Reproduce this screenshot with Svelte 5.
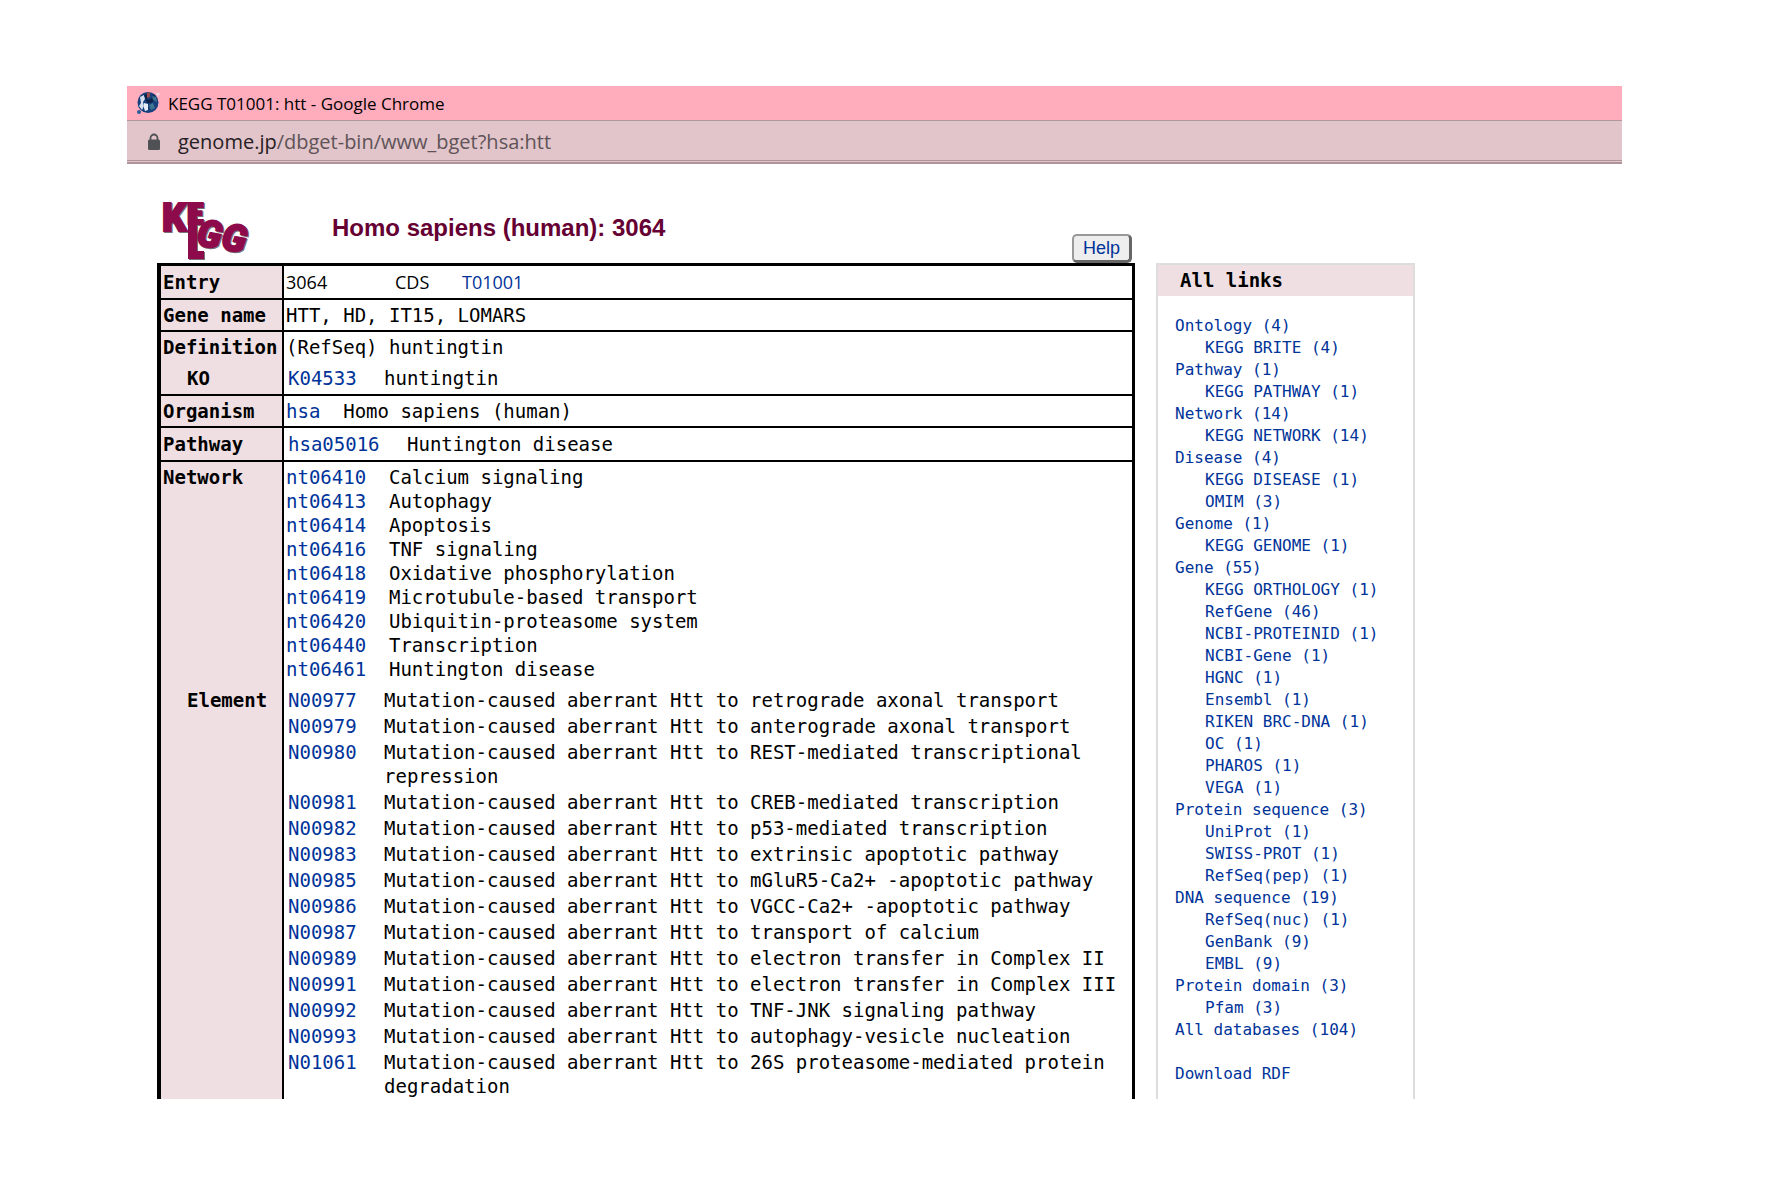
<script>
  const network = [
    ['nt06410', 'Calcium signaling'],
    ['nt06413', 'Autophagy'],
    ['nt06414', 'Apoptosis'],
    ['nt06416', 'TNF signaling'],
    ['nt06418', 'Oxidative phosphorylation'],
    ['nt06419', 'Microtubule-based transport'],
    ['nt06420', 'Ubiquitin-proteasome system'],
    ['nt06440', 'Transcription'],
    ['nt06461', 'Huntington disease'],
  ];
  const elements = [
    ['N00977', 'retrograde axonal transport'],
    ['N00979', 'anterograde axonal transport'],
    ['N00980', 'REST-mediated transcriptional repression'],
    ['N00981', 'CREB-mediated transcription'],
    ['N00982', 'p53-mediated transcription'],
    ['N00983', 'extrinsic apoptotic pathway'],
    ['N00985', 'mGluR5-Ca2+ -apoptotic pathway'],
    ['N00986', 'VGCC-Ca2+ -apoptotic pathway'],
    ['N00987', 'transport of calcium'],
    ['N00989', 'electron transfer in Complex II'],
    ['N00991', 'electron transfer in Complex III'],
    ['N00992', 'TNF-JNK signaling pathway'],
    ['N00993', 'autophagy-vesicle nucleation'],
    ['N01061', '26S proteasome-mediated protein degradation'],
  ];
  const links = [
    ['Ontology (4)', ['KEGG BRITE (4)']],
    ['Pathway (1)', ['KEGG PATHWAY (1)']],
    ['Network (14)', ['KEGG NETWORK (14)']],
    ['Disease (4)', ['KEGG DISEASE (1)', 'OMIM (3)']],
    ['Genome (1)', ['KEGG GENOME (1)']],
    ['Gene (55)', ['KEGG ORTHOLOGY (1)', 'RefGene (46)', 'NCBI-PROTEINID (1)', 'NCBI-Gene (1)', 'HGNC (1)', 'Ensembl (1)', 'RIKEN BRC-DNA (1)', 'OC (1)', 'PHAROS (1)', 'VEGA (1)']],
    ['Protein sequence (3)', ['UniProt (1)', 'SWISS-PROT (1)', 'RefSeq(pep) (1)']],
    ['DNA sequence (19)', ['RefSeq(nuc) (1)', 'GenBank (9)', 'EMBL (9)']],
    ['Protein domain (3)', ['Pfam (3)']],
    ['All databases (104)', []],
  ];
</script>

<div class="window">
  <header class="titlebar">
    <svg width="24" height="24" viewBox="0 0 24 24" aria-hidden="true">
      <circle cx="12" cy="11.500" r="10.500" fill="#173f7d" />
      <path d="M4 6L8 4L9 8L7 11L8 15L6 19L3 15L5 12Z" fill="#d5deea" />
      <path d="M8 12L12 13L12 19L9 20L8 17Z" fill="#e6ecf5" />
      <path d="M8 4L12 3L11 9L15 8L18 3L20 8L15 12L11 12Z" fill="#0b2146" />
      <path d="M11 2L14 1L14 6L11 7Z" fill="#9a4a48" />
      <path d="M16 5L20 6L21 11L17 9ZM13 14L17 12L19 17L15 19Z" fill="#3d7590" />
      <path d="M20 2L24 2L22 6Z" fill="#f2d9e2" />
      <circle cx="3" cy="21" r="2" fill="#2b5a98" />
    </svg>
    <span>KEGG T01001: htt - Google Chrome</span>
  </header>
  <div class="urlbar">
    <svg width="14" height="18" viewBox="0 0 14 18" aria-hidden="true">
      <path d="M3.500 7V5a3.500 3.500 0 0 1 7 0v2" fill="none" stroke="#505155" stroke-width="1.800" />
      <rect x="1" y="6.500" width="12" height="10.500" rx="1.500" fill="#505155" />
    </svg>
    <span class="url"><span class="host">genome.jp</span>/dbget-bin/www_bget?hsa:htt</span>
  </div>

  <main>
    <section class="record">
      <div class="masthead">
        <svg class="logo" width="92" height="62" viewBox="0 0 92 62" role="img" aria-label="KEGG">
          <defs>
            <g id="mark" font-family="Roboto, sans-serif" font-weight="900" stroke-width="2">
              <text x="0" y="31" font-size="38">K</text>
              <text x="25" y="24" font-size="29">E</text>
              <rect x="27" y="4" width="7" height="54" />
              <rect x="27" y="52" width="14" height="6" />
              <text x="35" y="47" font-size="37" font-style="italic" transform="rotate(10 48 36)">G</text>
              <text x="60" y="51" font-size="37" font-style="italic" transform="rotate(10 73 38)">G</text>
            </g>
          </defs>
          <use href="#mark" x="2" y="2" fill="#77727a" stroke="#77727a" />
          <use href="#mark" x="1" y="1" fill="#8d0a4b" stroke="#8d0a4b" />
        </svg>
        <h1>Homo sapiens (human): 3064</h1>
        <button type="button">Help</button>
      </div>

      <table>
        <tbody>
          <tr class="tall">
            <th scope="row">Entry</th>
            <td><div class="ids"><span>3064</span><span>CDS</span><a href="#T01001">T01001</a></div></td>
          </tr>
          <tr><th scope="row">Gene name</th><td>HTT, HD, IT15, LOMARS</td></tr>
          <tr class="upper"><th scope="row">Definition</th><td>(RefSeq) huntingtin</td></tr>
          <tr class="tall">
            <th scope="row" class="sub">KO</th>
            <td><div class="pair"><a href="#K04533">K04533</a><span>huntingtin</span></div></td>
          </tr>
          <tr><th scope="row">Organism</th><td class="spaced"><a href="#hsa">hsa</a>{'  '}Homo sapiens (human)</td></tr>
          <tr class="tall">
            <th scope="row">Pathway</th>
            <td><div class="pair wide"><a href="#hsa05016">hsa05016</a><span>Huntington disease</span></div></td>
          </tr>
          <tr class="upper">
            <th scope="row">Network</th>
            <td class="spaced">{#each network as [id, name]}<div><a href="#{id}">{id}</a>{'  '}{name}</div>{/each}</td>
          </tr>
          <tr class="elements">
            <th scope="row" class="sub">Element</th>
            <td>
              {#each elements as [id, name]}
                <div class="pair"><a href="#{id}">{id}</a><span>Mutation-caused aberrant Htt to {name}</span></div>
              {/each}
            </td>
          </tr>
        </tbody>
      </table>
    </section>

    <aside>
      <h2>All links</h2>
      <ul>
        {#each links as [group, items]}
          <li>
            <a href="#{group}">{group}</a>
            {#if items.length}
              <ul>
                {#each items as item}<li><a href="#{item}">{item}</a></li>{/each}
              </ul>
            {/if}
          </li>
        {/each}
        <li class="download"><a href="#rdf">Download RDF</a></li>
      </ul>
    </aside>
  </main>
</div>

<style>
  :global(body) { background: #fff; }
  .window { margin: 86px 145px 0 127px; padding-bottom: 98px; color: #000; }
  a { color: #039; text-decoration: none; }
  .titlebar, .urlbar { display: flex; align-items: center; box-sizing: border-box; font-family: 'Open Sans', 'Noto Sans', sans-serif; }
  .titlebar { height: 35px; gap: 8px; padding-left: 9px; background: #ffadbc; border-bottom: 1px solid #b0999e; font-size: 17px; }
  .urlbar { height: 43px; gap: 17px; padding-left: 20px; background: #e1c5ca; border-bottom: 2px solid #b0949c; box-shadow: inset 0 -1px #e1c5ca, inset 0 -2px #b0949c; color: #5f5358; font-size: 20px; }
  .host { color: #262024; }

  main { display: grid; grid-template-columns: minmax(0, 1fr) 259px; gap: 21px; padding: 0 207px 0 30px; }
  .masthead { display: flex; align-items: flex-start; height: 64px; padding-top: 35px; }
  .logo { margin-left: 4px; }
  h1 { flex: 1; margin: 14px 0 0 79px; font: bold 24px/30px 'Liberation Sans', Arial, sans-serif; color: #603; }
  button { align-self: flex-end; height: 29px; margin-right: 3px; padding: 0 9px; box-sizing: border-box; border: 2px solid #999; border-right: 3px solid #666; border-bottom: 3px solid #666; border-radius: 5px; background: #eee; color: #039; font: 18px/20px 'Liberation Sans', Arial, sans-serif; }

  table { width: 100%; border-collapse: separate; border-spacing: 0; border: solid #000; border-width: 3px 3px 0 4px; font: 19px/24px 'DejaVu Sans Mono', monospace; }
  th, td { padding: 3px 2px; border-bottom: 2px solid #000; text-align: left; vertical-align: top; }
  th { box-sizing: border-box; width: 123px; border-right: 2px solid #000; background: #efdfe2; white-space: nowrap; }
  .sub { padding-left: 26px; }
  .tall th, .tall td { padding-top: 4px; padding-bottom: 4px; }
  .ids { display: flex; font: 18px/24px 'Open Sans', sans-serif; }
  .ids span:first-child { width: 109px; }
  .ids span:nth-child(2) { width: 67px; }
  .upper th, .upper td { border-bottom: 0; }
  .elements th, .elements td { padding-top: 4px; padding-bottom: 1px; border-bottom: 0; }
  .spaced { white-space: pre-wrap; }
  .pair { display: grid; grid-template-columns: 96px minmax(0, 1fr); padding-left: 2px; }
  .pair + .pair { margin-top: 2px; }
  .wide { grid-template-columns: 119px minmax(0, 1fr); }

  aside { margin-top: 99px; border: 2px solid #ddd; border-bottom: 0; font: 16px/22px 'DejaVu Sans Mono', monospace; }
  h2 { margin: 0 0 19px; padding: 0 22px; background: #efdfe2; font-size: 19px; line-height: 31px; }
  ul { margin: 0; padding: 0 0 0 17px; list-style: none; }
  ul ul { padding-left: 30px; }
  .download { margin-top: 22px; }
</style>
